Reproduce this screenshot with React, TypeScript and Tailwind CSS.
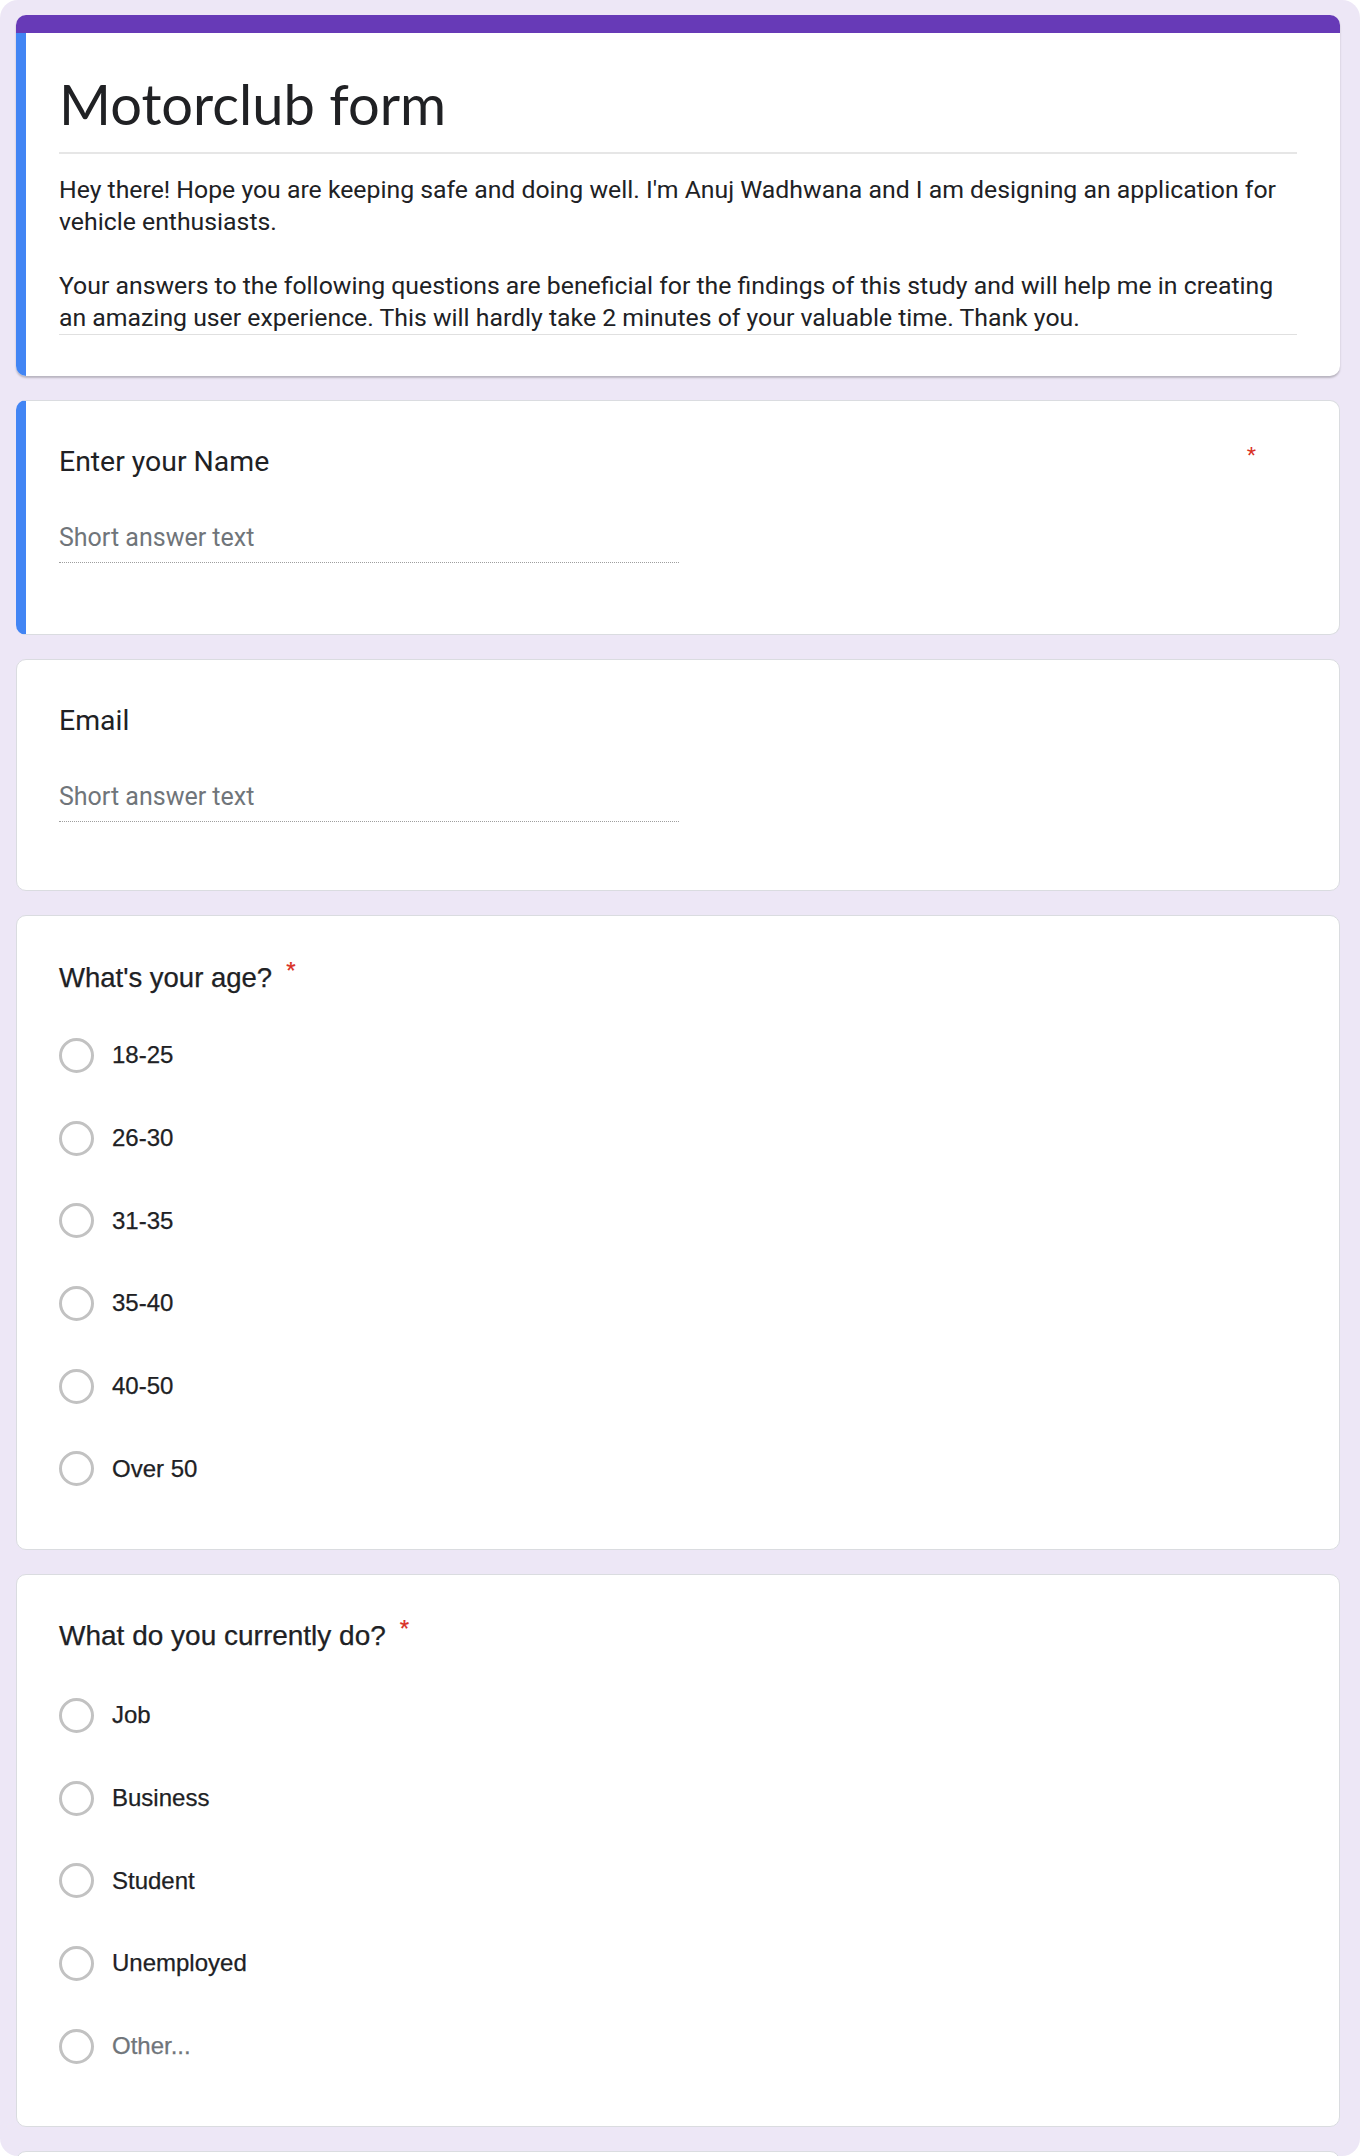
import React from "react";

const AGES = ["18-25", "26-30", "31-35", "35-40", "40-50", "Over 50"];
const JOBS = ["Job", "Business", "Student", "Unemployed", "Other..."];

function Radio({ label, muted }: { label: string; muted?: boolean }) {
  return (
    <div className="flex h-[82.7px] items-center gap-[18px]">
      <div className="h-[35px] w-[35px] shrink-0 rounded-full border-[3px] border-[#c2c2c2]" />
      <span
        className={`font-['Liberation_Sans',Arial,sans-serif] text-[24px] leading-[32px] [-webkit-text-stroke:0.25px] ${
          muted ? "text-[#70757a]" : "text-[#202124]"
        }`}
      >
        {label}
      </span>
    </div>
  );
}

function ShortAnswer() {
  return (
    <div className="w-[620px] border-b border-dotted border-[#9e9e9e] pb-[8px] font-['Roboto',sans-serif] text-[25px] leading-[32px] text-[#70757a]">
      Short answer text
    </div>
  );
}

export default function App() {
  return (
    <div className="min-h-screen bg-white">
      <div className="flex h-[2156px] w-[1360px] flex-col gap-[24px] overflow-hidden rounded-[18px] bg-[#ede7f6] pl-[16px] pr-[20px] pt-[15px]">
        {/* header card */}
        <div className="shrink-0 overflow-hidden rounded-[10px] bg-white shadow-[0_2px_2px_rgba(0,0,0,0.22)]">
          <div className="h-[18px] bg-[#673ab7]" />
          <div className="border-l-[10px] border-[#4285f4] pb-[41px] pl-[33px] pr-[43px] pt-[36px]">
            <h1 className="font-['Lato',sans-serif] text-[56px] leading-[70px] text-[#202124]">
              Motorclub form
            </h1>
            <div className="mt-[13px] h-[2px] bg-[#e6e6e6]" />
            <div className="mt-[20px] border-b border-[#e0e0e0] font-['Roboto',sans-serif] text-[24.8px] leading-[32px] text-[#202124]">
              <p>
                <span className="block whitespace-nowrap">
                  Hey there! Hope you are keeping safe and doing well. I'm Anuj Wadhwana and I am designing an application for
                </span>
                <span className="block">vehicle enthusiasts.</span>
              </p>
              <p className="mt-[32px]">
                <span className="block whitespace-nowrap">
                  Your answers to the following questions are beneficial for the findings of this study and will help me in creating
                </span>
                <span className="block">
                  an amazing user experience. This will hardly take 2 minutes of your valuable time. Thank you.
                </span>
              </p>
            </div>
          </div>
        </div>

        {/* name */}
        <div className="h-[235px] shrink-0 overflow-hidden rounded-[10px] border border-l-[10px] border-[#dadce0] border-l-[#4285f4] bg-white pl-[33px] pr-[43px] pt-[45px]">
          <div className="flex items-start justify-between">
            <span className="font-['Roboto',sans-serif] text-[28.4px] leading-[32px] text-[#202124]">Enter your Name</span>
            <span className="mr-[40px] mt-[-8px] font-['Liberation_Sans',Arial,sans-serif] text-[24px] text-[#d93025]">*</span>
          </div>
          <div className="mt-[44px]">
            <ShortAnswer />
          </div>
        </div>

        {/* email */}
        <div className="h-[232px] shrink-0 rounded-[10px] border border-[#dadce0] bg-white pl-[42px] pr-[43px] pt-[45px]">
          <div className="font-['Roboto',sans-serif] text-[28.4px] leading-[32px] text-[#202124]">Email</div>
          <div className="mt-[44px]">
            <ShortAnswer />
          </div>
        </div>

        {/* age */}
        <div className="h-[635px] shrink-0 rounded-[10px] border border-[#dadce0] bg-white pl-[42px] pr-[43px] pt-[46px]">
          <div className="flex items-start gap-[14px] font-['Liberation_Sans',Arial,sans-serif] text-[27.5px] leading-[32px] text-[#202124] [-webkit-text-stroke:0.25px]">
            <span>What's your age?</span>
            <span className="mt-[-7px] text-[24px] text-[#d93025]">*</span>
          </div>
          <div className="mt-[20px] flex flex-col">
            {AGES.map((a) => (
              <Radio key={a} label={a} />
            ))}
          </div>
        </div>

        {/* occupation */}
        <div className="h-[553px] shrink-0 rounded-[10px] border border-[#dadce0] bg-white pl-[42px] pr-[43px] pt-[45px]">
          <div className="flex items-start gap-[14px] font-['Liberation_Sans',Arial,sans-serif] text-[28px] leading-[32px] text-[#202124] [-webkit-text-stroke:0.25px]">
            <span>What do you currently do?</span>
            <span className="mt-[-7px] text-[24px] text-[#d93025]">*</span>
          </div>
          <div className="mt-[22px] flex flex-col">
            {JOBS.map((j) => (
              <Radio key={j} label={j} muted={j === "Other..."} />
            ))}
          </div>
        </div>

        {/* next card peeking */}
        <div className="h-[60px] shrink-0 rounded-[10px] border border-[#dadce0] bg-white" />
      </div>
    </div>
  );
}
